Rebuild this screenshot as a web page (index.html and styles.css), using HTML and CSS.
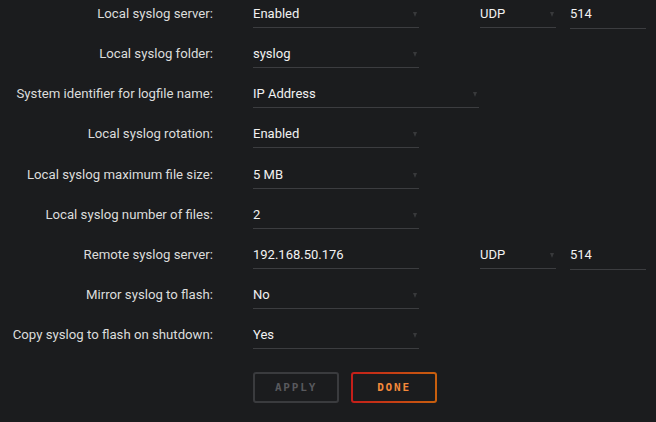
FILE: index.html
```html
<!DOCTYPE html>
<html lang="en">
<head>
    <meta charset="UTF-8">
    <title>Syslog settings</title>
    <link rel="stylesheet" href="styles.css">
</head>
<body>
    <!-- Syslog Form -->
    <div class="form">
        <div class="row">
            <label class="label">Local syslog server:</label>
            <div class="field select">Enabled</div>
            <div class="field select proto">UDP</div>
            <div class="field port">514</div>
        </div>
        <div class="row">
            <label class="label">Local syslog folder:</label>
            <div class="field select">syslog</div>
        </div>
        <div class="row">
            <label class="label">System identifier for logfile name:</label>
            <div class="field select wide">IP Address</div>
        </div>
        <div class="row">
            <label class="label">Local syslog rotation:</label>
            <div class="field select">Enabled</div>
        </div>
        <div class="row">
            <label class="label">Local syslog maximum file size:</label>
            <div class="field select">5 MB</div>
        </div>
        <div class="row">
            <label class="label">Local syslog number of files:</label>
            <div class="field select">2</div>
        </div>
        <div class="row">
            <label class="label">Remote syslog server:</label>
            <div class="field">192.168.50.176</div>
            <div class="field select proto">UDP</div>
            <div class="field port">514</div>
        </div>
        <div class="row">
            <label class="label">Mirror syslog to flash:</label>
            <div class="field select">No</div>
        </div>
        <div class="row">
            <label class="label">Copy syslog to flash on shutdown:</label>
            <div class="field select">Yes</div>
        </div>

        <div class="actions">
            <button class="btn btn-apply">APPLY</button>
            <button class="btn btn-done">DONE</button>
        </div>
    </div>
</body>
</html>
```

FILE: styles.css
```css
/* Global Styles */
body {
    margin: 0;
    background: #1b1c1e;
    font-family: Roboto, "Liberation Sans", sans-serif;
    font-size: 13px;
    color: #e6e6e6;
}
.row {
    display: flex;
    align-items: flex-start;
    height: 40.15px;
}
.label {
    width: 213px;
    flex: none;
    text-align: right;
    line-height: 28px;
    font-size: 13.2px;
    color: #dcdcdc;
}
/* Fields */
.field {
    position: relative;
    margin-left: 40px;
    width: 166px;
    height: 27px;
    line-height: 28px;
    border-bottom: 1px solid #3c3d40;
    color: #f2f2f2;
}
.field.wide {
    width: 226px;
}
.field.proto {
    margin-left: 61px;
    width: 76px;
}
.field.port {
    margin-left: 14px;
    width: 76px;
    height: 28px;
}
.select::after {
    content: "";
    position: absolute;
    right: 2px;
    top: 12px;
    border-left: 2.5px solid transparent;
    border-right: 2.5px solid transparent;
    border-top: 5px solid #38393b;
}
/* Buttons */
.actions {
    display: flex;
    gap: 12px;
    margin-top: 11px;
    margin-left: 253px;
}
.btn {
    width: 86px;
    height: 31px;
    padding: 0;
    background: #1b1c1e;
    border: 2px solid #3a3b3e;
    border-radius: 3px;
    font-family: "DejaVu Sans Mono", monospace;
    font-weight: bold;
    font-size: 11px;
    letter-spacing: 1.8px;
    color: #58595d;
    cursor: pointer;
}
.btn-done {
    color: #f5893a;
    border-color: transparent;
    background:
        linear-gradient(#1b1c1e, #1b1c1e) padding-box,
        linear-gradient(90deg, #c41e1a, #c8600e) border-box;
}
```
